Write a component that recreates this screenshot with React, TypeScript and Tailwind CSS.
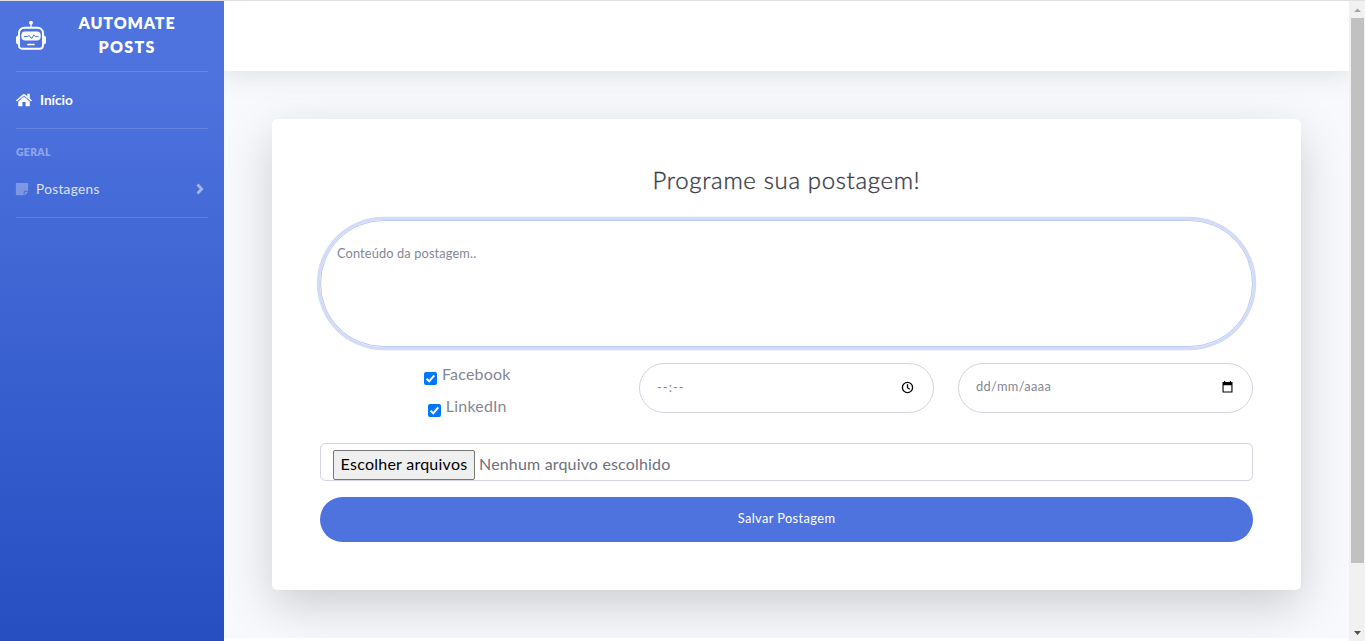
import React from "react";
import { FaStickyNote } from "react-icons/fa";

function Robot() {
  return (
    <svg width="32" height="32" viewBox="0 0 32 32" fill="none" className="-ml-px shrink-0">
      <circle cx="16" cy="2.700" r="1.900" fill="#fff" />
      <path d="M16 3v5" stroke="#fff" strokeWidth="1.300" />
      <path d="M9.700 7.700h12.600c3.400 0 5.700 2.300 5.700 5.700v12.200c0 2-1.200 3.200-3.200 3.200H7.200c-2 0-3.200-1.200-3.200-3.200V13.400c0-3.400 2.300-5.700 5.700-5.700z" stroke="#fff" strokeWidth="1.900" />
      <path d="M3.500 15.500C1.800 15.500 1 16.500 1 18v4C1 23.500 1.800 24.500 3.500 24.500zM28.500 15.500c1.700 0 2.500 1 2.500 2.500v4c0 1.500-.8 2.500-2.500 2.500z" fill="#fff" />
      <rect x="6.300" y="11.500" width="19.400" height="9" rx="4" fill="#fff" />
      <path d="M9 16.500h3.500l1.700-1 1.800 2.500h1.200l1.600-3 1.700 1.600h3" stroke="#4e73df" strokeWidth="1" />
      <path d="M13 24.500h6" stroke="#fff" strokeWidth="1.700" strokeLinecap="round" />
    </svg>
  );
}

function House() {
  return (
    <svg width="16" height="14" viewBox="0 0 16 14" fill="#fff">
      <path d="M8 3.300 13.800 8.200V12.600q0 .6-.6.600H9.600V9H6.400v4.200H2.800q-.6 0-.6-.6V8.200z" />
      <path d="M.9 7.500 7.300 2.100q.7-.6 1.400 0l6.400 5.400" fill="none" stroke="#fff" strokeWidth="1.500" strokeLinecap="round" />
      <path d="M11.300.7h2.500v5l-2.500-2z" />
      <path d="M2.200 8.300 8 3.500l5.800 4.800" fill="none" stroke="#4e73df" strokeWidth=".5" />
    </svg>
  );
}

function Sidebar() {
  return (
    <aside className="h-[709px] w-56 shrink-0 bg-[linear-gradient(180deg,#4e73df_10%,#224abe_100%)] px-4 text-white">
      <div className="box-content flex h-[70px] items-center border-b border-white/15">
        <Robot />
        <div className="mb-0.5 ml-[30px] w-[100px] text-center text-[16px] leading-6 font-extrabold tracking-[0.85px]">
          AUTOMATE <span className="tracking-[1.3px]">POSTS</span>
        </div>
      </div>
      <div className="box-content flex h-14 items-center border-b border-white/15">
        <House />
        <span className="ml-2 text-[13.6px] font-bold">Início</span>
      </div>
      <div className="mt-[15px] mb-px text-[10.4px] leading-4 font-extrabold tracking-[0.35px] text-white/40">GERAL</div>
      <div className="box-content flex h-14 items-center border-b border-white/15">
        <FaStickyNote size={14} className="-ml-px text-white/30" />
        <span className="ml-[7px] text-[13.6px] tracking-[0.33px] text-white/80">Postagens</span>
        <svg width="8" height="12" viewBox="0 0 8 12" fill="none" stroke="#fff" strokeWidth="2.800" className="mr-1 ml-auto opacity-50">
          <path d="M1.500 1.500 5.700 6l-4.200 4.500" />
        </svg>
      </div>
    </aside>
  );
}

function Check({ label }: { label: string }) {
  return (
    <label className="flex h-8 items-start justify-center gap-[4.500px] text-[16px] leading-6 text-[#858796]">
      <span className="mt-[9px] flex size-[13px] items-center justify-center rounded-[2px] bg-[#0075ff]">
        <svg width="11" height="11" viewBox="0 0 11 11" fill="none" stroke="#fff" strokeWidth="2">
          <path d="M1.500 5.800 4.200 8.300 9.300 2.300" />
        </svg>
      </span>
      <span className="-mt-px tracking-[0.2px]">{label}</span>
    </label>
  );
}

export default function App() {
  return (
    <div className="flex h-[641px] w-[1365px] flex-col overflow-hidden bg-white font-['Lato',sans-serif]">
      <div className="h-px shrink-0 bg-[#dfe0e1]" />
      <div className="flex h-[640px] overflow-hidden">
        <Sidebar />
        <main className="flex h-[640px] w-[1125px] flex-col overflow-hidden bg-white">
          <div className="h-[637px] shrink-0 overflow-hidden bg-[#f8f9fc]">
            <header className="h-[70px] bg-white shadow-[0_2.4px_28px_0_rgba(58,59,69,0.15)]" />
            <section className="mx-12 mt-12 h-[471px] rounded-[5.6px] bg-white px-12 pt-[46px] pb-12 shadow-[0_16px_48px_rgba(0,0,0,0.175)]">
              <h1 className="text-center text-[24px] leading-[29px] font-light tracking-[0.65px] text-[#3a3b45] [-webkit-text-stroke:0.35px_#3a3b45]">
                <span>Programe sua postagem!</span>
              </h1>
              <div className="mt-[26px] h-[127px] rounded-[64px] border border-[#bac8f3] px-4 pt-[23px] text-[12.8px] leading-[19px] tracking-[0.13px] text-[#858796] shadow-[0_0_0_3.2px_rgba(78,115,223,0.25)]">
                <span>Conteúdo da postagem..</span>
              </div>
              <div className="mt-4 grid grid-cols-3 gap-6">
                <div className="h-16">
                  <Check label="Facebook" />
                  <Check label="LinkedIn" />
                </div>
                <div className="flex h-[50px] items-center justify-between rounded-full border border-[#d1d3e2] pr-[19px] pb-px pl-[17px] text-[12.8px] text-[#858796]">
                  <span className="tracking-[1.1px]">--:--</span>
                  <svg width="13" height="13" viewBox="0 0 13 13" fill="none" stroke="#000" strokeWidth="1.300">
                    <circle cx="6.500" cy="6.500" r="5.100" />
                    <path d="M6.500 3.300v3.400l2.300 1.500" />
                  </svg>
                </div>
                <div className="flex h-[50px] items-center justify-between rounded-full border border-[#d1d3e2] pr-[19px] pb-0.5 pl-[17px] text-[12.8px] text-[#858796]">
                  <span className="tracking-[0.38px]">dd/mm/aaaa</span>
                  <svg width="11" height="12" viewBox="0 0 11 12">
                    <path d="M.5 1H2V0h1.200v1h4.600V0H9v1h1.500v10.500H.5zM1.600 4.200v6.200h7.800V4.200z" fillRule="evenodd" />
                  </svg>
                </div>
              </div>
              <div className="mt-4 flex h-[38px] items-start rounded-[5.6px] border border-[#d1d3e2] pt-1.5 pl-3 text-[16px] text-[#6e707e]">
                <span className="flex h-[30px] w-[142px] items-center justify-center rounded-[2px] border border-[#767676] bg-[#efefef] pb-0.5 tracking-[0.25px] text-black">Escolher arquivos</span>
                <span className="ml-1 leading-[28px] tracking-[0.17px]">Nenhum arquivo escolhido</span>
              </div>
              <button className="mt-4 flex h-[45px] w-full items-center justify-center rounded-full bg-[#4e73df] pb-0.5 text-[12.8px] tracking-[0.4px] text-white">
                <span>Salvar Postagem</span>
              </button>
            </section>
          </div>
        </main>
        <div className="flex w-4 flex-col items-center bg-[#f1f1f1]">
          <svg width="7" height="17" viewBox="0 0 7 17"><path d="M0 11h7L3.500 7.500z" fill="#a3a3a3" /></svg>
          <div className="ml-[1px] h-[545px] w-[13px] bg-[#c1c1c1]" />
          <svg width="7" height="17" viewBox="0 0 7 17" className="mt-auto"><path d="M0 7h7L3.500 11z" fill="#505050" /></svg>
        </div>
      </div>
    </div>
  );
}
